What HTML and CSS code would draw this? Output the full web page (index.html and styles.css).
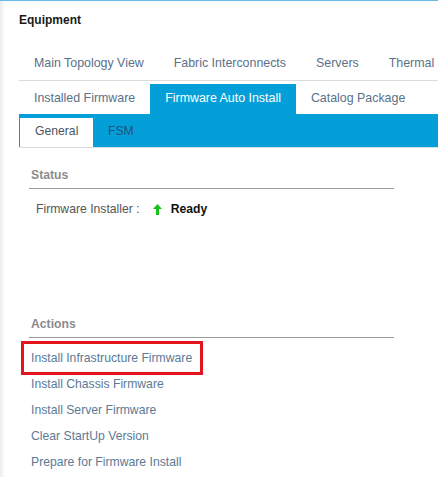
FILE: index.html
```html
<!DOCTYPE html>
<html>
<head>
<meta charset="utf-8">
<link rel="stylesheet" href="styles.css">
</head>
<body>
<div class="page">
  <div class="title">Equipment</div>
  <div class="tabs tabs-main">
    <span class="tab">Main Topology View</span>
    <span class="tab">Fabric Interconnects</span>
    <span class="tab">Servers</span>
    <span class="tab">Thermal</span>
  </div>
  <div class="tabs tabs-sub">
    <span class="tab">Installed Firmware</span>
    <span class="tab active">Firmware Auto Install</span>
    <span class="tab">Catalog Package</span>
  </div>
  <div class="band">
    <span class="btab selected">General</span>
    <span class="btab">FSM</span>
  </div>
  <div class="content">
    <div class="section-title">Status</div>
    <div class="status-row">
      <span class="label">Firmware Installer :</span>
      <svg class="arrow" width="9" height="11" viewBox="0 0 9 11"><path d="M4.5 0 L9 5 L6 5 L6 11 L3 11 L3 5 L0 5 Z" fill="#19c019"/></svg>
      <span class="ready">Ready</span>
    </div>
    <div class="section-title actions-title">Actions</div>
  </div>
  <ul class="actions">
    <li><span class="link highlighted">Install Infrastructure Firmware</span></li>
    <li><span class="link">Install Chassis Firmware</span></li>
    <li><span class="link">Install Server Firmware</span></li>
    <li><span class="link">Clear StartUp Version</span></li>
    <li><span class="link">Prepare for Firmware Install</span></li>
  </ul>
</div>
</body>
</html>
```
FILE: styles.css
```css
html, body {
  margin: 0;
  padding: 0;
}
body {
  width: 438px;
  height: 477px;
  overflow: hidden;
  background: linear-gradient(to right, #ececec 0, #f7f7f7 3px, #ffffff 5px);
  border-top: 1px solid #6cb9e6;
  box-sizing: border-box;
  font-family: "Liberation Sans", Arial, sans-serif;
  font-size: 12px;
}
.page {
  padding-left: 19px;
}
.title {
  font-weight: bold;
  color: #1a1a1a;
  font-size: 12px;
  line-height: 16px;
  padding-top: 11px;
  height: 35px;
}
.tabs {
  display: flex;
  white-space: nowrap;
}
.tab {
  padding: 0 15px;
  color: #5a7189;
  font-size: 12.4px;
}
.tabs-main {
  height: 33px;
  line-height: 33px;
  border-bottom: 1px solid #dcdcdc;
}
.tabs-sub {
  margin-top: 3px;
  height: 30px;
  line-height: 28px;
}
.tabs-sub .tab.active {
  background: #049fd9;
  color: #ffffff;
}
.band {
  display: flex;
  background: #049fd9;
  padding: 4px 0 0 1px;
  height: 29px;
  border-bottom: 1px solid #d5dde3;
}
.btab {
  line-height: 26px;
  padding: 0 15px 0 15px;
  color: #1f5480;
  font-size: 12.2px;
}
.btab.selected {
  background: #ffffff;
  color: #4a5560;
  width: 43px;
}
.content {
  margin-left: 10px;
  width: 365px;
}
.section-title {
  font-weight: bold;
  color: #8c8c8c;
  font-size: 12.2px;
  line-height: 16px;
  padding-top: 19px;
  padding-bottom: 5px;
  border-bottom: 1px solid #9a9a9a;
  padding-left: 2px;
}
.status-row {
  display: flex;
  align-items: center;
  height: 33px;
  padding-top: 3px;
  padding-left: 7px;
  color: #555555;
  font-size: 12.2px;
}
.arrow {
  margin-left: 13px;
  margin-top: 2px;
}
.ready {
  font-weight: bold;
  color: #111111;
  margin-left: 9px;
}
.actions-title {
  margin-top: 72px;
}
.actions {
  list-style: none;
  margin: 0;
  padding: 7px 0 0 6px;
}
.actions li {
  height: 26px;
  line-height: 26px;
}
.link {
  display: inline-block;
  color: #5b7a96;
  font-size: 12.2px;
  padding: 0 7px 0 6px;
}
.link.highlighted {
  outline: 3px solid #e3141c;
  outline-offset: 1px;
}
```
